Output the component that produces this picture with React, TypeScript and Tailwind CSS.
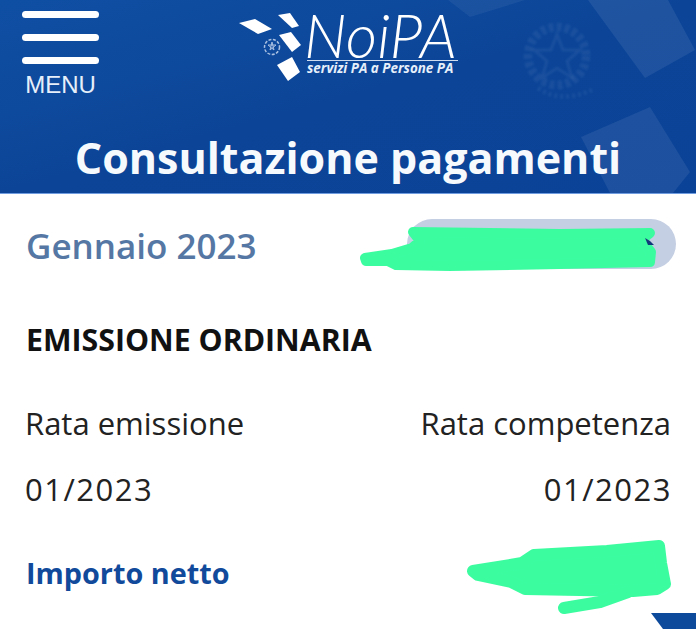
const LogoMark = () => (
  <svg width="64" height="72" viewBox="0 0 64 72" className="shrink-0">
    <polygon points="0,12 16,8 33,18 19,23" fill="#ffffff" />
    <polygon points="39,4 51,2 60,15 53,17" fill="#ffffff" />
    <polygon points="40,24 52,21 62,34 53,41" fill="#ffffff" />
    <polygon points="38,54 53,46 61,61 49,70" fill="#ffffff" />
    <g fill="none" stroke="#a9c0e2" strokeWidth="1.5">
      <circle cx="33" cy="36" r="7.5" strokeDasharray="3 1.5" />
      <path d="M33 31 L35 39 L29 34 L37 34 L31 39 Z" strokeWidth="1" />
    </g>
  </svg>
);

const HeaderDecor = () => (
  <svg className="absolute inset-0 h-full w-full" viewBox="0 0 696 193">
    <polygon points="448,0 525,0 470,17" fill="#ffffff" fillOpacity="0.06" />
    <polygon points="588,0 668,0 695,50 645,78" fill="#ffffff" fillOpacity="0.08" />
    <polygon points="581,137 650,107 690,172 673,193 610,193" fill="#ffffff" fillOpacity="0.08" />
    <g fill="none" stroke="#ffffff" strokeOpacity="0.06" className="blur-[1px]">
      <circle cx="557" cy="56" r="29" strokeWidth="9" strokeDasharray="5 3" />
      <path d="M557 34 L563 50 L580 50 L567 61 L572 78 L557 68 L542 78 L547 61 L534 50 L551 50 Z" strokeWidth="3" />
      <path d="M538 88 Q560 104 592 90" strokeWidth="5" strokeDasharray="3 3" />
    </g>
  </svg>
);

const Scribbles = () => (
  <svg className="absolute left-0 top-0 h-[629px] w-[696px]" viewBox="0 0 696 629">
    <g fill="#3cfca0" stroke="#3cfca0" strokeLinejoin="round" strokeLinecap="round">
      <path
        d="M413 232 L560 234 L650 233 L641 240 L651 252 L650 262 L560 264 L450 266 L396 265 L388 261 L366 261 L365 258 L392 254 L412 248 L420 241 Z"
        strokeWidth="10"
      />
      <path
        d="M473 571 L522 563 L534 555 L607 551 L659 546 L661 563 L665 584 L657 589 L633 591 L525 589 L511 582 L478 575 Z"
        strokeWidth="12"
      />
      <path d="M628 592 L600 602 L564 608" fill="none" strokeWidth="12" />
    </g>
    <path d="M645 238 L650 241 L654 245 L648 245 Z" fill="#123a7a" />
    <polygon points="651,613 696,613 696,629 663,629" fill="#0d4a9c" />
  </svg>
);

export default function App() {
  return (
    <div className="relative h-[629px] w-[696px] overflow-hidden bg-white font-['Open_Sans',sans-serif]">
      <header className="relative h-[194px] border-b border-[#6f9be0] bg-gradient-to-br from-[#0f4fa3] via-[#0c4598] to-[#0a4297]">
        <HeaderDecor />
        <div className="relative flex h-[131px] items-start">
          <button className="ml-[22px] mt-[11px] flex w-[77px] flex-col gap-[16px]">
            <span className="h-[7px] rounded-full bg-white" />
            <span className="h-[7px] rounded-full bg-white" />
            <span className="h-[7px] rounded-full bg-white" />
            <span className="-mt-[13px] text-center font-['Liberation_Sans',sans-serif] text-[24px] leading-[36px] text-[#e6effa]">
              MENU
            </span>
          </button>
          <div className="ml-[140px] mt-[11px] flex gap-[4px]">
            <LogoMark />
            <div className="flex w-[160px] flex-col">
              <span className="-ml-[3px] whitespace-nowrap font-['Lato',sans-serif] text-[61px] font-light italic leading-[48px] text-white">
                NoiPA
              </span>
              <span className="mt-[1px] w-[151px] whitespace-nowrap border-t border-[#cfdcf0] text-[13.4px] font-bold italic leading-[15px] text-[#e6effa]">
                servizi PA a Persone PA
              </span>
            </div>
          </div>
        </div>
        <h1 className="relative text-center text-[43px] font-bold leading-[54px] text-[#f7fafd]">
          Consultazione pagamenti
        </h1>
      </header>

      <main className="relative px-[26px]">
        <div className="flex h-[100px] items-center justify-between">
          <h2 className="mt-[3px] text-[35px] font-semibold leading-[44px] text-[#5577a4]">Gennaio 2023</h2>
          <div className="-mr-[6px] h-[50px] w-[269px] rounded-full bg-[#c5cfe3]" />
        </div>
        <h3 className="mt-[27px] text-[30.3px] font-bold leading-[38px] text-[#111111]">EMISSIONE ORDINARIA</h3>
        <div className="-mr-[1px] -ml-[1px] mt-[45px] flex justify-between text-[31px] leading-[38px] text-[#222222]">
          <span>Rata emissione</span>
          <span>Rata competenza</span>
        </div>
        <div className="-mr-[2px] -ml-[1px] mt-[28px] flex justify-between text-[31px] leading-[38px] tracking-[1.5px] text-[#222222]">
          <span>01/2023</span>
          <span>01/2023</span>
        </div>
        <p className="mt-[47px] text-[28.8px] font-bold leading-[36px] text-[#114a9b]">Importo netto</p>
      </main>

      <Scribbles />
    </div>
  );
}
